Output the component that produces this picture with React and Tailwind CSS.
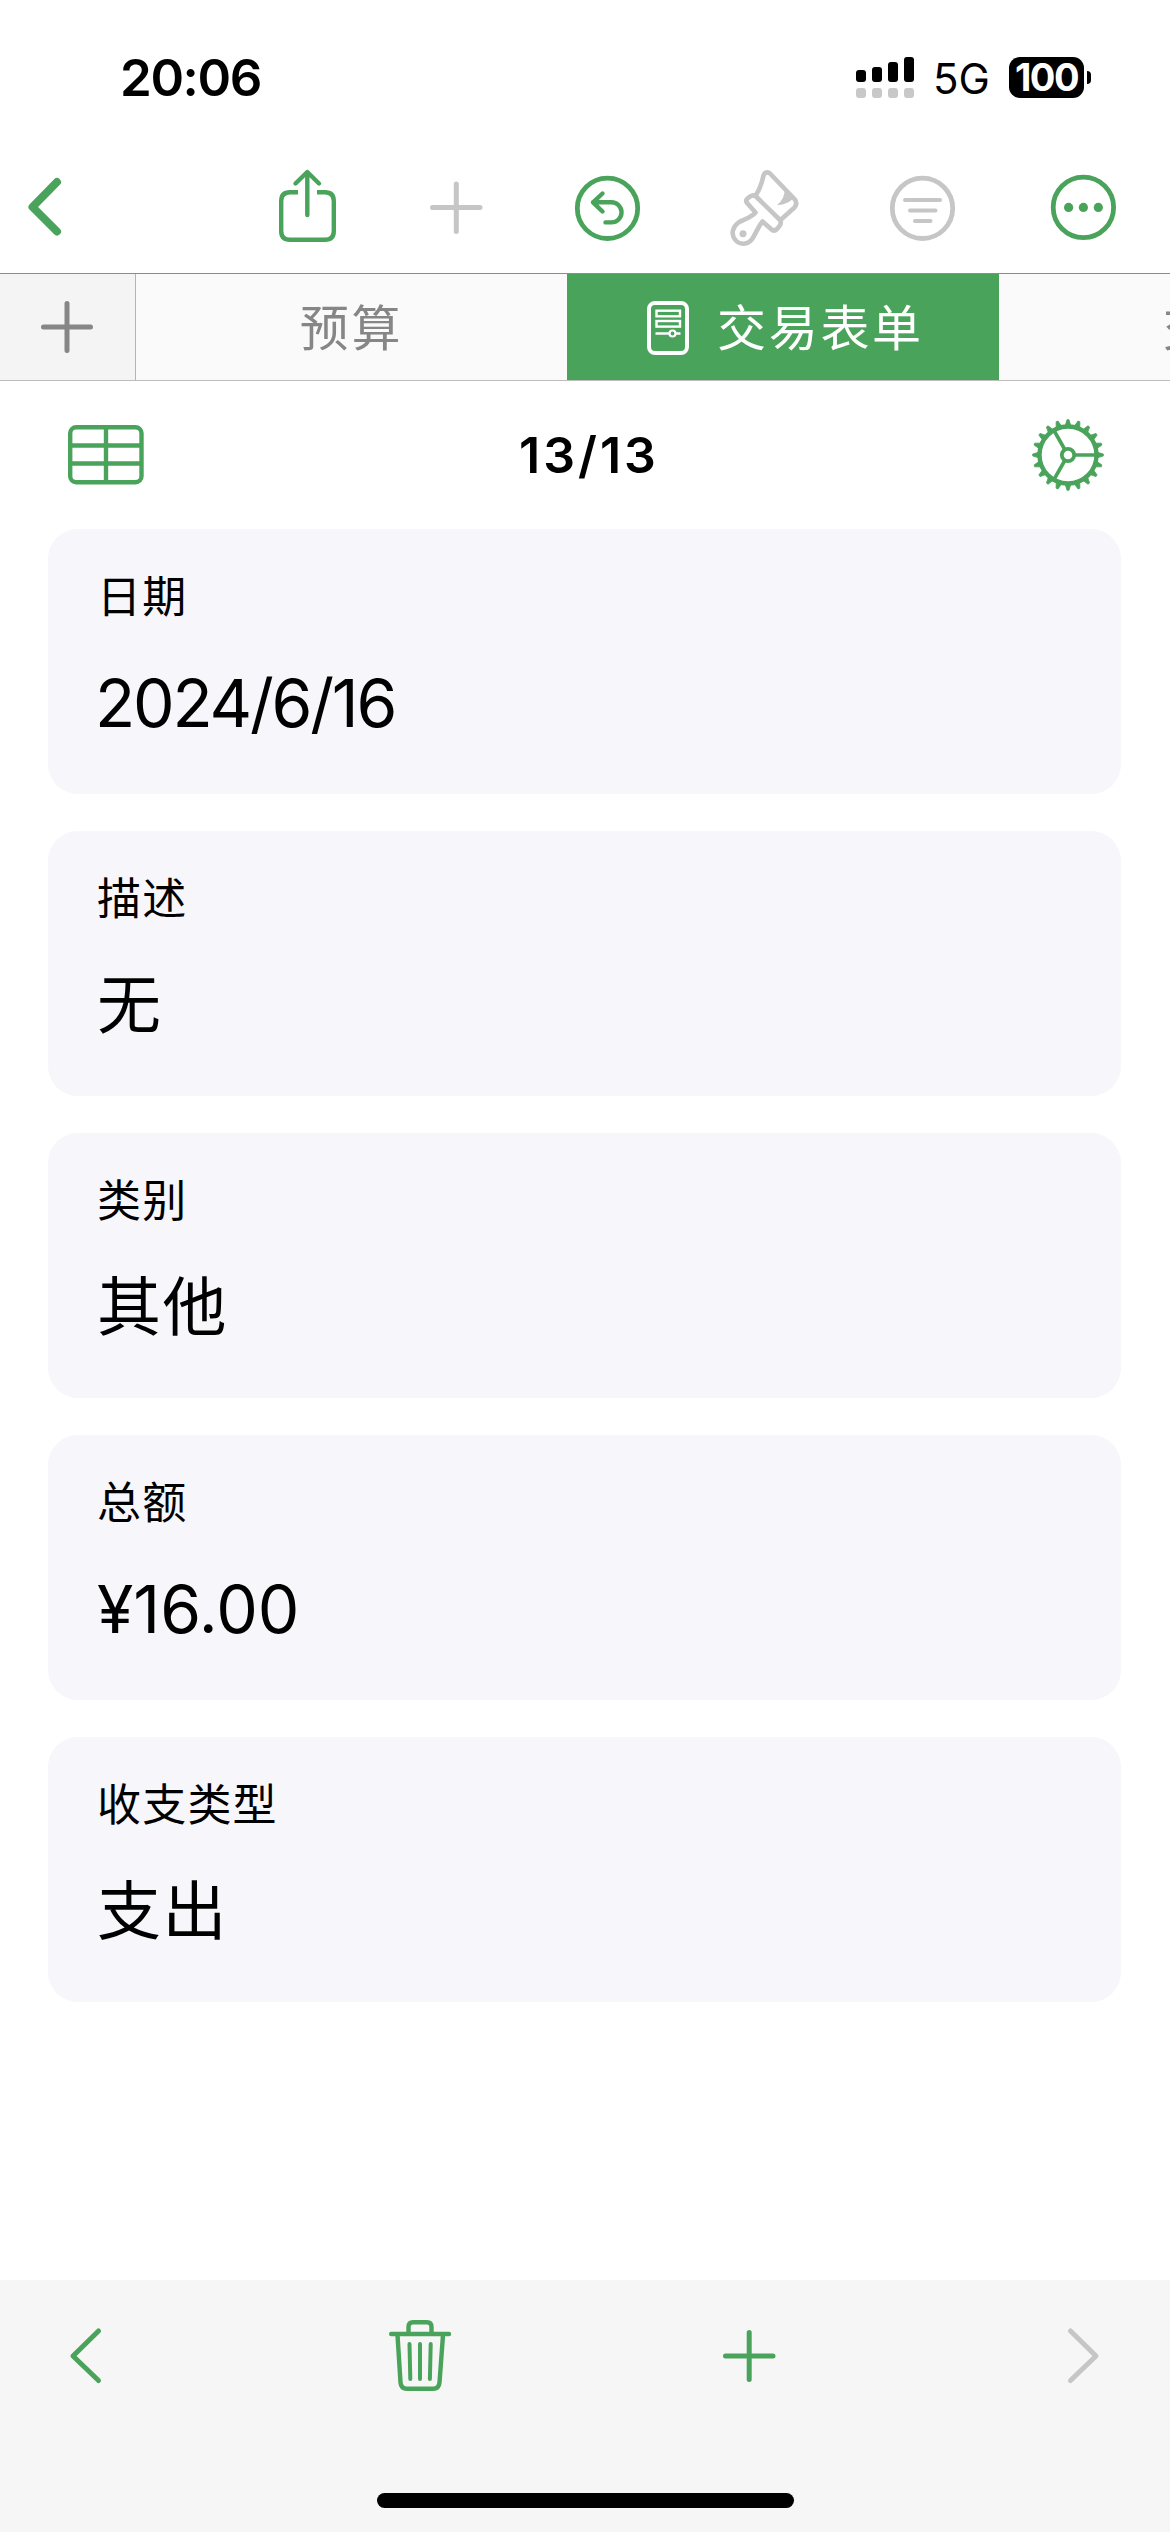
const GREEN = '#4aa35a';
const GRAY = '#c6c6c6';

const FIELDS = [
  { label: '日期', value: '2024/6/16', style: 'text-[66px] tracking-[-2.2px] -ml-[2px]' },
  { label: '描述', value: '无', style: 'text-[64px] tracking-[1.5px]' },
  { label: '类别', value: '其他', style: 'text-[64px] tracking-[1.5px]' },
  { label: '总额', value: '¥16.00', style: 'text-[66px]' },
  { label: '收支类型', value: '支出', style: 'text-[64px] tracking-[1.5px]' },
];

const TEETH = Array.from({ length: 20 }, (_, i) => i * 18);

function Icon({ w, h, box, color = GREEN, stroke = 4.4, className = '', children }) {
  return (
    <svg
      width={w}
      height={h}
      viewBox={box || `0 0 ${w} ${h}`}
      fill="none"
      stroke={color}
      strokeWidth={stroke}
      strokeLinecap="round"
      strokeLinejoin="round"
      className={`shrink-0 ${className}`}
    >
      {children}
    </svg>
  );
}

function StatusBar() {
  return (
    <div className="flex h-[156px] shrink-0">
      <div className="ml-[120px] mt-[40px] h-[76px] w-[200px] text-[51px] leading-[76px] font-semibold tracking-[-1.4px]">20:06</div>
      <Icon w={58} h={41} box="856 57 58 41" stroke={0} className="ml-[536px] mt-[57px]">
        <g fill="#000">
          <rect x="856" y="70" width="10" height="12" rx="3" />
          <rect x="872" y="67" width="10" height="15" rx="3" />
          <rect x="888" y="62" width="10" height="20" rx="3" />
          <rect x="904" y="57" width="10" height="25" rx="3" />
        </g>
        <g fill="#c8c8c8">
          <rect x="856" y="88" width="10" height="10" rx="3" />
          <rect x="872" y="88" width="10" height="10" rx="3" />
          <rect x="888" y="88" width="10" height="10" rx="3" />
          <rect x="904" y="88" width="10" height="10" rx="3" />
        </g>
      </Icon>
      <div className="ml-[19px] mt-[54px] h-[50px] w-[76px] text-[42px] leading-[50px]">5G</div>
      <div className="mt-[57px] flex h-[41px] w-[75px] items-center justify-center rounded-[11px] bg-black text-[38px] font-bold tracking-[-1.6px] text-white">
        100
      </div>
      <div className="ml-[3px] mt-[71px] h-[13px] w-1 rounded-r-full bg-black" />
    </div>
  );
}

function Toolbar() {
  return (
    <div className="flex h-[117px] shrink-0">
      <Icon w={40} h={90} box="24 160 40 90" stroke={8} className="ml-[24px] mt-1">
        <path d="M57 182 32.5 207 57 231.5" />
      </Icon>
      <Icon w={70} h={90} box="272 160 70 90" className="ml-[208px] mt-1">
        <path d="M298 192.2H290Q281.2 192.2 281.2 201V231Q281.2 239.800 290 239.800H325Q333.800 239.800 333.800 231V201Q333.800 192.2 325 192.2H317" strokeLinecap="butt" />
        <path d="M307.3 215V172.5M295.5 183.5 307.3 172 319 183.5" />
      </Icon>
      <Icon w={70} h={90} box="421 160 70 90" stroke={5} color={GRAY} className="ml-[79px] mt-1">
        <path d="M432.5 207.6H480M456.3 184V231.5" />
      </Icon>
      <Icon w={70} h={90} box="572 160 70 90" className="ml-[81px] mt-1">
        <circle cx="607.5" cy="208.3" r="30.2" strokeWidth="4.8" />
        <path d="M602.5 193.5 593 202.3 602.5 211.5M593 202.3H611.5A10 10 0 0 1 611.5 222.4H605.5" />
      </Icon>
      <Icon w={80} h={90} box="726 160 80 90" color={GRAY} stroke={4.6} className="ml-[84px] mt-1">
        <path d="M756.5 194C761 187 762 182 763.5 175.5Q765 171 769.5 173L794.5 199Q798 203.5 794.5 207.5L780.5 220" />
        <path d="M747.5 203.5Q745 201 747.5 198.5L750 196.5Q753.5 194 756.5 197L779.5 219.5Q782 222.5 779.5 226L777 229Q774 232 771 229L762.5 221.5C758 227 756 233 752.5 238.5C748 245.5 739 245 735 239.5C730.5 233.5 733 226.5 738.5 222.5C744 219 751 218 755.5 212.5Z" />
        <circle cx="743" cy="233.7" r="3.5" fill={GRAY} stroke="none" />
        <path d="M784.5 189 793 199Q786 205 777 205Q785 199 784.5 189Z" fill={GRAY} stroke="none" />
      </Icon>
      <Icon w={70} h={90} box="887 160 70 90" color={GRAY} className="ml-[81px] mt-1">
        <circle cx="922.5" cy="208.3" r="30.2" strokeWidth="4.8" />
        <path d="M905 200H940M910 210.5H935.5M915 221H930.5" strokeWidth="4" />
      </Icon>
      <Icon w={70} h={90} box="1048 160 70 90" className="ml-[91px] mt-1">
        <circle cx="1083.4" cy="207.4" r="30.2" strokeWidth="4.8" />
        <g fill={GREEN} stroke="none">
          <circle cx="1068.6" cy="207.4" r="4.6" />
          <circle cx="1083.4" cy="207.4" r="4.6" />
          <circle cx="1098.3" cy="207.4" r="4.6" />
        </g>
      </Icon>
    </div>
  );
}

function Tabs() {
  return (
    <div className="flex h-[108px] shrink-0 overflow-hidden border-t border-b border-t-[#8c8c8c] border-b-[#bdbdbd] text-[49px] tracking-[2.7px]">
      <div className="flex w-[136px] shrink-0 items-center justify-center border-r border-[#b4b4b4] bg-[#f4f4f4]">
        <Icon w={54} h={54} color="#868686" stroke={5} className="-ml-[1px]">
          <path d="M3.5 27H50.5M27 3.5V50.5" />
        </Icon>
      </div>
      <div className="flex w-[431px] shrink-0 items-center justify-center bg-[#fafafa] pt-1 text-[#868686]">
        预算
      </div>
      <div className="flex w-[432px] shrink-0 items-center bg-[#4aa35a] pl-[80px] text-white">
        <Icon w={42} h={54} color="#fff" stroke={4} className="mt-[2px]">
          <rect x="2" y="2" width="38" height="50" rx="6" />
          <rect x="9.5" y="9.7" width="23.5" height="5.6" strokeWidth="2.4" strokeLinejoin="miter" />
          <rect x="9.5" y="20" width="23.5" height="5.6" strokeWidth="2.4" strokeLinejoin="miter" />
          <path d="M8.5 32.5H22M29 32.5H33.5" strokeWidth="2.4" strokeLinecap="butt" />
          <circle cx="25.5" cy="32.5" r="3" strokeWidth="2.2" />
        </Icon>
        <span className="ml-[28px] pt-1">交易表单</span>
      </div>
      <div className="flex w-[431px] shrink-0 items-center justify-center bg-[#fafafa] pt-1 text-[#868686]">
        交易
      </div>
    </div>
  );
}

function FormHeader() {
  return (
    <div className="flex h-[148px] shrink-0 items-start justify-between pr-[62px] pl-[68px]">
      <Icon w={76} h={60} className="mt-[44px]">
        <rect x="2.2" y="2.2" width="71.3" height="55" rx="6" />
        <path d="M38 2V57M2 20.5H73M2 38.5H73" strokeLinecap="butt" />
      </Icon>
      <div className="mt-[44px] ml-[6px] text-[50px] leading-[60px] font-semibold tracking-[3px]">13/13</div>
      <Icon w={80} h={80} box="-40 -40 80 80" stroke={4.4} className="mt-[34px]">
        <circle r="28.5" />
        <circle r="6.2" strokeWidth="3.8" />
        <path d="M7 0H28M-3.5 -6 -14 -24.5M-3.5 6 -14 24.5" strokeWidth="3.6" />
        {TEETH.map((deg) => (
          <path key={deg} d="M30 -2.6 35.3 -1V1L30 2.6Z" transform={`rotate(${deg})`} fill={GREEN} strokeWidth="0.8" />
        ))}
      </Icon>
    </div>
  );
}

function Field({ label, value, style }) {
  return (
    <div className="h-[265px] shrink-0 rounded-[30px] bg-[#f6f6fb] pl-[49px]">
      <div className="pt-[38px] text-[44px] leading-[60px] tracking-[1.2px]">{label}</div>
      <div className="mt-[36px] leading-[80px]">
        <div className={style}>{value}</div>
      </div>
    </div>
  );
}

function BottomBar() {
  return (
    <div className="flex h-[252px] shrink-0 flex-col items-center bg-[#f6f6f6]">
      <div className="flex h-[213px] w-full">
        <Icon w={40} h={80} box="65 2316 40 80" stroke={5} className="ml-[65px] mt-[36px]">
          <path d="M98.5 2331 73 2356 98.5 2380.5" />
        </Icon>
        <Icon w={70} h={80} box="385 2316 70 80" className="ml-[280px] mt-[36px]">
          <path d="M391.2 2334H449M408.5 2333V2327Q408.5 2322.2 413 2322.2H427Q431.5 2322.2 431.5 2327V2333" />
          <path d="M397.5 2335 400.5 2382.5Q401 2388.8 407 2388.8H433Q439 2388.8 439.5 2382.5L443 2335" />
          <path d="M409.5 2344 410.3 2379M420 2344V2379M430.7 2344 429.9 2379" strokeWidth="4" />
        </Icon>
        <Icon w={60} h={80} box="719 2316 60 80" stroke={5} className="ml-[264px] mt-[36px]">
          <path d="M725.5 2356H773M749.2 2332.5V2379.5" />
        </Icon>
        <Icon w={40} h={80} box="1064 2316 40 80" stroke={5} color={GRAY} className="ml-[285px] mt-[36px]">
          <path d="M1070.5 2331 1096 2356 1070.5 2380.5" />
        </Icon>
      </div>
      <div className="h-[15px] w-[417px] rounded-full bg-black" />
    </div>
  );
}

export default function App() {
  return (
    <div className="flex h-[2532px] w-[1170px] flex-col overflow-hidden bg-white font-[Inter,'Noto_Sans_CJK_SC',sans-serif] text-black">
      <StatusBar />
      <Toolbar />
      <Tabs />
      <FormHeader />
      <div className="flex flex-1 flex-col gap-[37px] pr-[49px] pl-[48px]">
        {FIELDS.map((f) => (
          <Field key={f.label} {...f} />
        ))}
      </div>
      <BottomBar />
    </div>
  );
}
